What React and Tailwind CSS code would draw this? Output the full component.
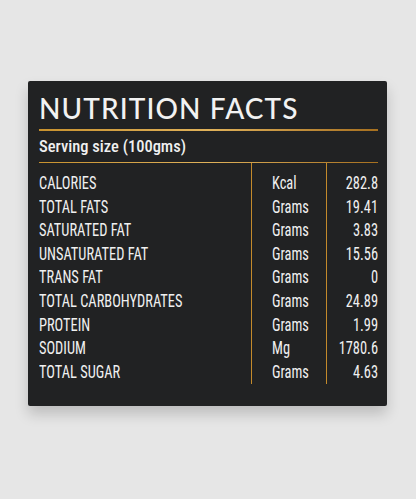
const rows = [
  ['CALORIES', 'Kcal', '282.8'],
  ['TOTAL FATS', 'Grams', '19.41'],
  ['SATURATED FAT', 'Grams', '3.83'],
  ['UNSATURATED FAT', 'Grams', '15.56'],
  ['TRANS FAT', 'Grams', '0'],
  ['TOTAL CARBOHYDRATES', 'Grams', '24.89'],
  ['PROTEIN', 'Grams', '1.99'],
  ['SODIUM', 'Mg', '1780.6'],
  ['TOTAL SUGAR', 'Grams', '4.63'],
];

export default function App() {
  return (
    <div className="w-[416px] h-[499px] bg-[#e6e6e6] pt-[81px] pl-[28px] overflow-hidden">
      <div className="w-[359px] h-[325px] bg-[#212223] rounded-[2px] shadow-[0_8px_14px_rgba(0,0,0,0.18)] pl-[11px] pr-[9px] pt-[12px]">
        {/* Title */}
        <h1 className="font-['Lato',sans-serif] font-medium text-[28px] leading-none tracking-[1.1px] text-[#f2f2f2] h-[36px] pt-[1px]">
          NUTRITION FACTS
        </h1>
        <div className="h-[1.5px] bg-gradient-to-r from-[#c8922e] via-[#e0b25a] to-[#a6701f]" />

        <div className="font-['Roboto',sans-serif] font-stretch-condensed text-[#f0f0f0]">
          <div className="h-[31px] pt-[6px] text-[16.5px] leading-[20px] font-medium">Serving size (100gms)</div>
          <div className="h-[1.5px] bg-gradient-to-r from-[#c8922e] via-[#e0b25a] to-[#a6701f]" />

          {/* Table */}
          <div className="grid grid-cols-[212px_76px_51px] h-[221px] text-[18px] leading-[23.6px]">
            <div className="pt-[8px]">
              <div className="scale-x-[0.8] origin-left whitespace-nowrap">
                {rows.map(([label]) => (
                  <div key={label}>{label}</div>
                ))}
              </div>
            </div>
            <div className="pt-[8px] pl-[20px] border-l-[1.5px] border-r-[1.5px] border-[#c38a2b]">
              <div className="scale-x-[0.8] origin-left">
                {rows.map(([label, unit]) => (
                  <div key={label}>{unit}</div>
                ))}
              </div>
            </div>
            <div className="pt-[8px] text-right">
              <div className="scale-x-[0.8] origin-right">
                {rows.map(([label, , value]) => (
                  <div key={label}>{value}</div>
                ))}
              </div>
            </div>
          </div>
        </div>
      </div>
    </div>
  );
}
